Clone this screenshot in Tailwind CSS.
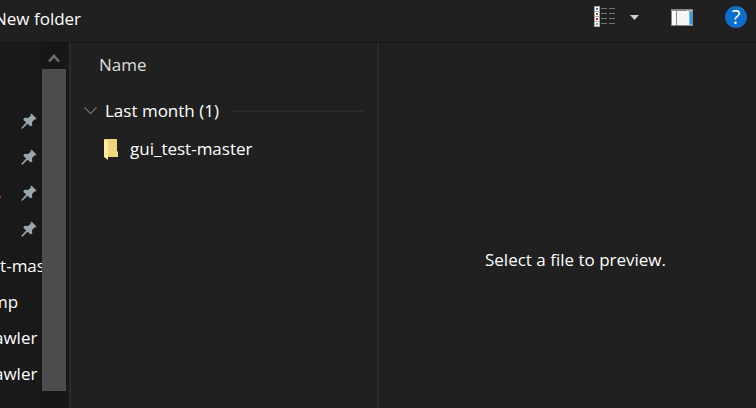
<!DOCTYPE html>
<html lang="en">
<head>
<meta charset="utf-8">
<title>Select folder</title>
<script src="https://cdn.jsdelivr.net/npm/@tailwindcss/browser@4"></script>
</head>
<body class="flex h-screen flex-col overflow-hidden bg-[#202020] font-['Open_Sans','Noto_Sans',sans-serif] text-[17px] leading-6 text-white">
<svg class="hidden" aria-hidden="true">
  <symbol id="pin" viewBox="0 0 16 16"><path d="M10.500 0.500 15.500 5.500 14 6.800 13.200 6.400 11 9.200 11.300 12.200 9.600 13.600 6.600 10.800 1.600 15.400 0.300 15.800 0.600 14.400 5.200 9.400 2.200 6.400 3.600 4.800 7 5 9.900 2.800 9.400 1.800Z" fill="#9aa6ad"/></symbol>
</svg>
<header class="flex h-[43px] shrink-0 items-center justify-between border-b border-[#141414] pr-[9px] pb-1">
  <button class="-ml-1.5 whitespace-nowrap">New folder</button>
  <div class="flex items-center pb-1">
    <button aria-label="Change your view">
      <svg class="block" width="22" height="22" viewBox="0 0 22 22" shape-rendering="crispEdges">
        <path fill="#a8a8a8" d="M0 0h6v21H0z"/>
        <path fill="#fff" d="M1 1h4v4H1zM1 6h4v4H1zM1 11h4v4H1zM1 16h4v4H1z"/>
        <path fill="#3c7fae" d="M2 2h2v2H2z"/><path fill="#a8623e" d="M2 7h2v2H2z"/><path fill="#d01818" d="M2 12h2v2H2z"/><path fill="#73a353" d="M2 17h2v2H2z"/>
        <path fill="#767676" d="M7 2h6v1H7zM15 2h6v1h-6zM7 7h6v1H7zM15 7h6v1h-6zM7 12h6v1H7zM15 12h6v1h-6zM7 17h6v1H7zM15 17h6v1h-6z"/>
      </svg>
    </button>
    <button class="ml-3.5" aria-label="More view options">
      <svg class="block" width="9" height="5" viewBox="0 0 9 5"><path d="M0 0h9L4.500 5z" fill="#d0d0d0"/></svg>
    </button>
    <button class="ml-8" aria-label="Hide the preview pane">
      <svg class="block" width="22" height="17" viewBox="0 0 22 17">
        <path fill="#85898c" d="M0 0h22v17H0z"/><path fill="#fbfbfb" d="M1 2h4v14H1z"/><path fill="#f4f5f6" d="M6 2h12v14H6z"/><path fill="#7dbcf0" d="M18 2h3v14h-3z"/><path fill="#3c9be8" d="M19 3h2v12h-2z"/><path fill="#ddd" d="M16 1h1v1h-1zM18 1h1v1h-1zM20 1h1v1h-1z"/>
      </svg>
    </button>
    <button class="ml-8 flex size-[22px] items-center justify-center rounded-full bg-[#0b6fd0] text-xl" aria-label="Get help">?</button>
  </div>
</header>
<main class="flex min-h-0 flex-1">
  <nav class="flex w-[69px] shrink-0 bg-[#191919]" aria-label="Folders">
    <ul class="min-w-0 flex-1 overflow-hidden pt-[60px]">
      <li class="flex h-9 items-center justify-end pr-[5px]"><svg class="size-4"><use href="#pin"/></svg></li>
      <li class="flex h-9 items-center justify-end pr-[5px]"><svg class="size-4"><use href="#pin"/></svg></li>
      <li class="flex h-9 items-center justify-between pr-[5px]"><span class="mt-2 h-0.5 w-px bg-[#b03c2c]"></span><svg class="size-4"><use href="#pin"/></svg></li>
      <li class="flex h-9 items-center justify-end pr-[5px]"><svg class="size-4"><use href="#pin"/></svg></li>
      <li class="flex h-9 items-center pt-0.5"><a href="#" class="-ml-2 whitespace-nowrap">st-mas</a></li>
      <li class="flex h-9 items-center pt-0.5"><a href="#" class="-ml-2">mp</a></li>
      <li class="flex h-9 items-center pt-0.5"><a href="#" class="-ml-1.5">awler</a></li>
      <li class="flex h-9 items-center pt-0.5"><a href="#" class="-ml-1.5">awler</a></li>
    </ul>
    <div class="mr-[3px] flex w-6 flex-col bg-[#171717]">
      <button class="flex h-[26px] shrink-0 items-center justify-center" aria-label="Scroll up">
        <svg class="mt-1" width="12" height="10" viewBox="0 0 12 10"><path d="M1 8.500 6 3l5 5.500" fill="none" stroke="#6c6c6c" stroke-width="2.600"/></svg>
      </button>
      <div class="min-h-0 flex-1"><div class="h-[95%] bg-[#4d4d4d]"></div></div>
    </div>
  </nav>
  <section class="w-[310px] shrink-0 border-x-2 border-[#2b2b2b] pt-2.5">
    <h2 class="pl-7 text-[#dedede]">Name</h2>
    <div class="mt-[22px] flex items-center pr-3 pl-[13px]">
      <button class="flex items-center" aria-expanded="true"><svg class="mr-2" width="13" height="8" viewBox="0 0 13 8"><path d="M0.500 0.500 6.500 6.500 12.500 0.500" fill="none" stroke="#707070" stroke-width="1.200"/></svg><span class="whitespace-nowrap">Last month (1)</span></button>
      <span class="ml-3 h-0.5 flex-1 bg-[#2b2b2b]"></span>
    </div>
    <a href="#" class="mt-3.5 flex items-center pl-[33px]">
      <svg class="mr-3 shrink-0" width="14" height="21" viewBox="0 0 14 21"><path d="M1 0h12v12l1 1v5H3L0 16V1z" fill="#f3d47a"/><path d="M0 0 4 3v18L0 18z" fill="#ffe9a5"/></svg>
      <span>gui_test-master</span>
    </a>
  </section>
  <aside class="flex min-w-0 flex-1 items-center justify-center pt-[68px] pl-4"><p>Select a file to preview.</p></aside>
</main>
</body>
</html>
